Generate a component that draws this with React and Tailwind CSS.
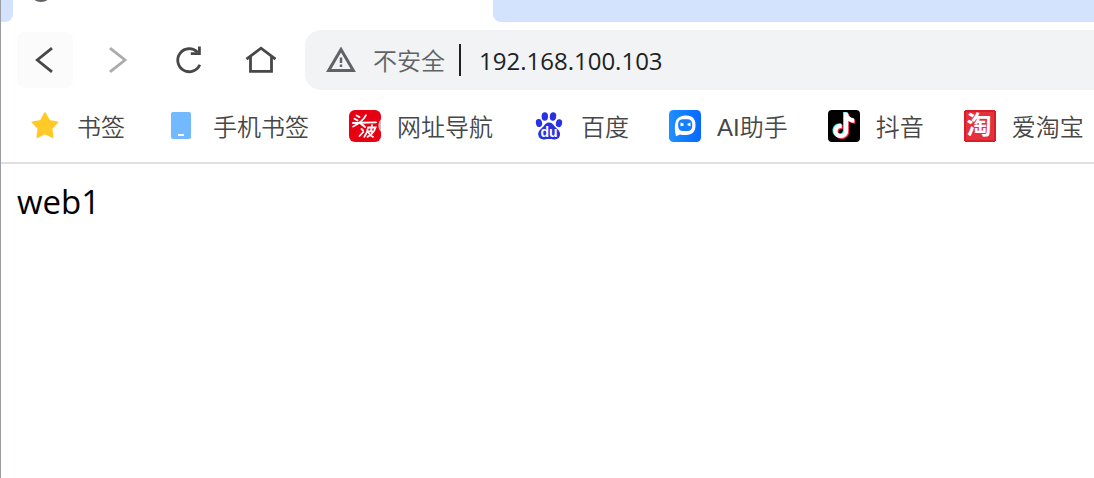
import { useState } from "react";

const NAV_BUTTON = "flex size-14 shrink-0 items-center justify-center rounded-lg";

function BackIcon() {
  return (
    <svg width="32" height="32" viewBox="0 0 32 32" fill="none" stroke="#474747" strokeWidth="2.8">
      <path d="M23 4.200 8.300 16 23 27.800" />
    </svg>
  );
}

function ForwardIcon() {
  return (
    <svg width="32" height="32" viewBox="0 0 32 32" fill="none" stroke="#ababab" strokeWidth="2.8">
      <path d="M9 4.200 24 16 9 27.800" />
    </svg>
  );
}

function ReloadIcon() {
  return (
    <svg width="32" height="32" viewBox="0 0 32 32" fill="none" stroke="#474747" strokeWidth="2.8">
      <path d="M24.500 8.200A11.500 11.500 0 1 0 26.800 20.800" />
      <path d="M26.400 2.500v7.100h-8.600" />
    </svg>
  );
}

function HomeIcon() {
  return (
    <svg width="32" height="32" viewBox="0 0 32 32" fill="none" stroke="#474747" strokeWidth="2.8">
      <path d="M1.500 15.200 16 4.200l14.500 11" />
      <path d="M5.500 12.500v14.800h21V12.500" />
    </svg>
  );
}

function WarningIcon() {
  return (
    <svg className="shrink-0" width="32" height="32" viewBox="0 0 32 32">
      <path d="M16 5.500 28.300 26.400H3.700Z" fill="none" stroke="#5f6368" strokeWidth="3" />
      <path d="M14.800 13.500h2.400v5.500h-2.400zM14.800 20.600h2.400v2.400h-2.400z" fill="#5f6368" />
    </svg>
  );
}

function StarIcon() {
  return (
    <svg width="32" height="32" viewBox="0 0 32 32">
      <path
        d="m16 3 4.200 7.700 8.400 1.500-6 6.300 1.200 8.700-7.800-3.700-7.800 3.700 1.200-8.700-6-6.300 8.400-1.500Z"
        fill="#ffca28"
        stroke="#ffca28"
        strokeWidth="1.6"
        strokeLinejoin="round"
      />
    </svg>
  );
}

function PhoneIcon() {
  return (
    <svg width="32" height="32" viewBox="0 0 32 32">
      <rect x="6" y="2" width="20" height="27" rx="2" fill="#73b9ff" />
      <rect x="13" y="24" width="6" height="2" fill="#fff" />
    </svg>
  );
}

function TouboIcon() {
  return (
    <svg width="32" height="32" viewBox="0 0 32 32">
      <rect width="32" height="32" rx="6" fill="#e60012" />
      <path d="M32 9c-3.500 3.500-3.500 9.500 0 13Z" fill="#c9bcbc" />
      <g fill="none" stroke="#fff" strokeWidth="1.8" strokeLinecap="round">
        {/* upper glyph */}
        <path d="m7.500 5.500 3 1.600M5.500 8.800l3 1.600M17 5.200C14.500 10 9.500 14 4.200 16.500M3.800 13 27 12.300M11.500 13.500l3 2.300" />
        {/* lower glyph */}
        <path d="m14.500 15.500 1.500 1.500M12.500 19l1.500 1.500M10.500 26l3.800-4M19 17.500h7.500l-1 2.300M19 17.500c-.5 4-1.500 6.700-3.700 9.300M23 15.200l-1 6M18.500 21.300h6.200c-1.500 2.600-3.700 4.500-6.200 5.500M19.500 22.500c1 2.300 2.300 3.500 4.500 4.300" />
      </g>
    </svg>
  );
}

function BaiduIcon() {
  return (
    <svg width="32" height="32" viewBox="0 0 32 32" fill="#2932e1">
      <ellipse cx="11.800" cy="6.500" rx="3.200" ry="4.200" />
      <ellipse cx="20" cy="6.500" rx="3.200" ry="4.200" transform="rotate(8 20 6.500)" />
      <ellipse cx="6" cy="13" rx="3.100" ry="4" transform="rotate(-12 6 13)" />
      <ellipse cx="26" cy="13.200" rx="3.100" ry="4" transform="rotate(12 26 13.200)" />
      <path d="M16 12.500c2.800 0 4.200 2 5.800 4 2 2.300 5.500 4.100 5.300 8-.2 3.400-2.800 5.200-6.200 4.900-3.200-.4-6.400-.4-9.600 0-3.300.3-5.900-1.500-6.100-4.900-.2-3.900 3.200-5.700 5.200-8 1.600-2 2.800-4 5.600-4Z" />
      <text x="16" y="27" textAnchor="middle" fill="#fff" fontFamily="Liberation Sans, sans-serif" fontWeight="bold" fontSize="14">
        du
      </text>
    </svg>
  );
}

function AssistantIcon() {
  return (
    <svg width="32" height="32" viewBox="0 0 32 32">
      <defs>
        <linearGradient id="assistant" x1="0" x2="1">
          <stop offset="0" stopColor="#1e90ff" />
          <stop offset="1" stopColor="#0768ff" />
        </linearGradient>
      </defs>
      <rect width="32" height="32" rx="4.500" fill="url(#assistant)" />
      <path
        d="M7 26.300C5.500 21 5.300 15 7 10.700 8.500 7.200 13 5.500 17.500 5.500c6 0 9 3.500 9 9.800s-3.200 9.700-9.500 9.700c-2 0-4.500-.3-6-.6Z"
        fill="#fff"
      />
      <rect x="9.200" y="9.300" width="14" height="11.700" rx="4.500" fill="#147eff" />
      <path d="m11.500 12.500 3 1v2.200l-3 .6ZM21.500 12.500l-3 1.300v1.500l3 1Z" fill="#fff" />
    </svg>
  );
}

function DouyinIcon() {
  const note =
    "M16 2.500h3.800c.5 3.500 2.700 5.800 6.400 6.100v4.200c-2.400 0-4.400-.7-6-2v9.900c0 4.300-3.200 7.300-7.300 7.300-4.200 0-7.400-3-7.400-7.100 0-4.400 3.700-7.500 8.200-7v4.100c-2.300-.4-4.100.8-4.100 2.900 0 1.800 1.400 3 3.100 3 2.100 0 3.300-1.300 3.300-3.700Z";
  return (
    <svg width="32" height="32" viewBox="0 0 32 32">
      <rect width="32" height="32" rx="4" fill="#000" />
      <g transform="translate(-1 -.5)">
        <path d={note} fill="#25f4ee" />
      </g>
      <g transform="translate(1 1)">
        <path d={note} fill="#fe2c55" />
      </g>
      <path d={note} fill="#fff" />
    </svg>
  );
}

function TaobaoIcon() {
  return (
    <svg className="overflow-visible" width="32" height="32" viewBox="0 0 32 32">
      <rect x="1" width="30" height="32" fill="#d81e2b" />
      <rect y="1" width="32" height="30" fill="#d81e2b" />
      <rect x="2" y="2" width="28" height="28" fill="#e4313b" />
      <text x="15" y="24" textAnchor="middle" fill="#fff" fontFamily="Noto Sans CJK SC, sans-serif" fontWeight="bold" fontSize="25">
        淘
      </text>
    </svg>
  );
}

const bookmarks = [
  { title: "书签", Icon: StarIcon },
  { title: "手机书签", Icon: PhoneIcon },
  { title: "网址导航", Icon: TouboIcon },
  { title: "百度", Icon: BaiduIcon },
  { title: "AI助手", Icon: AssistantIcon },
  { title: "抖音", Icon: DouyinIcon },
  { title: "爱淘宝", Icon: TaobaoIcon },
];

function TabStrip() {
  return (
    <div className="flex h-[22px] bg-white">
      <div className="w-3 rounded-br-lg bg-[#d3e3fd]" />
      <div className="flex w-[480px] shrink-0 items-start overflow-hidden pl-4">
        <div className="-mt-[22px] size-6 shrink-0 rounded-full bg-[#5f6368]" />
      </div>
      <div className="flex-1 rounded-bl-lg bg-[#d3e3fd]" />
    </div>
  );
}

function Toolbar() {
  const [url, setUrl] = useState("192.168.100.103");

  return (
    <div className="flex items-center gap-4 py-2 pl-4">
      <button type="button" aria-label="后退" className={`${NAV_BUTTON} bg-[#fbfbfb]`}>
        <BackIcon />
      </button>
      <button type="button" aria-label="前进" disabled className={NAV_BUTTON}>
        <ForwardIcon />
      </button>
      <button type="button" aria-label="刷新" className={NAV_BUTTON}>
        <ReloadIcon />
      </button>
      <button type="button" aria-label="主页" className={NAV_BUTTON}>
        <HomeIcon />
      </button>
      <div className="flex h-15 min-w-0 flex-1 items-center rounded-l-2xl bg-[#f1f3f4] pl-5">
        <button type="button" className="flex shrink-0 items-center gap-4 text-[#5f6368]">
          <WarningIcon />
          <span className="pt-0.5 font-[350]">不安全</span>
        </button>
        <div className="mr-[18px] ml-3.5 h-8 w-0.5 shrink-0 bg-[#202124]" />
        <input
          type="text"
          aria-label="地址"
          value={url}
          onChange={(e) => setUrl(e.target.value)}
          className="min-w-0 flex-1 bg-transparent pt-0.5 text-[#202124] outline-none"
        />
      </div>
    </div>
  );
}

function BookmarksBar() {
  return (
    <nav className="flex gap-10 overflow-hidden border-b-2 border-[#e0e0e0] pt-3 pb-5 pl-7 font-['Liberation_Sans','Noto_Sans_CJK_SC',sans-serif]">
      {bookmarks.map(({ title, Icon }) => (
        <a key={title} href="#" className="flex h-8 shrink-0 items-center gap-4 whitespace-nowrap text-[#474747]">
          <Icon />
          <span className="pt-1 font-[350]">{title}</span>
        </a>
      ))}
    </nav>
  );
}

export default function App() {
  return (
    <div className="min-h-screen border-l border-[#9a9da3] bg-white font-['Open_Sans','Noto_Sans_CJK_SC',sans-serif] text-2xl">
      <TabStrip />
      <Toolbar />
      <BookmarksBar />
      <main className="px-4 py-4 text-[33px] leading-11 text-black">web1</main>
    </div>
  );
}
